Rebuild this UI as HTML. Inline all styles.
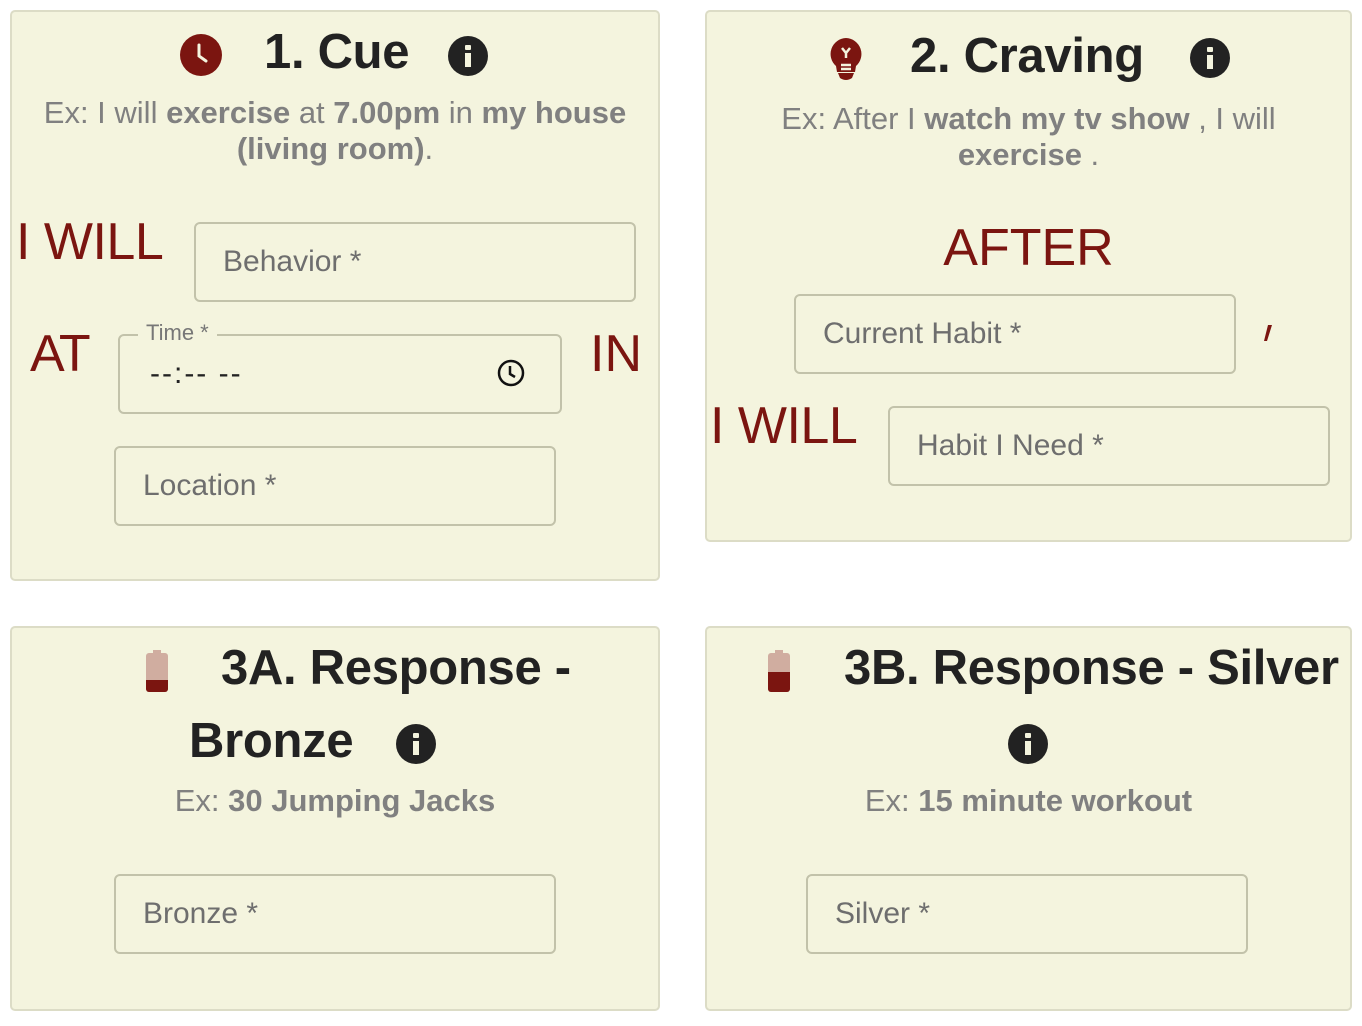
<!DOCTYPE html>
<html><head><style>
*{margin:0;padding:0;box-sizing:border-box}
body{width:1362px;height:1026px;background:#fff;font-family:"Liberation Sans",sans-serif;position:relative;overflow:hidden}
.card{position:absolute;background:#f4f4de;border:2px solid #dcdcc6;border-radius:5px}
.a{position:absolute;white-space:nowrap}
.t{font-weight:bold;font-size:49px;color:#222;letter-spacing:-0.3px}
.s{font-size:31px;color:#808080;text-align:center}
.s b{font-weight:bold}
.r{color:#7b1510;font-size:52px}
.in{position:absolute;border:2px solid #c2c2aa;border-radius:6px;height:80px;font-size:30px;color:#6e6e6e;padding-left:27px;line-height:76px}
.info{position:absolute;width:40px;height:40px;border-radius:50%;background:#222}
.info:before{content:"";position:absolute;left:17px;top:9px;width:6px;height:5px;background:#f4f4de;border-radius:1px}
.info:after{content:"";position:absolute;left:17px;top:17px;width:6px;height:14px;background:#f4f4de}
</style></head><body>
<div class="card" style="left:10px;top:10px;width:650px;height:571px"></div>
<div class="card" style="left:705px;top:10px;width:647px;height:532px"></div>
<div class="card" style="left:10px;top:626px;width:650px;height:385px"></div>
<div class="card" style="left:705px;top:626px;width:647px;height:385px"></div>

<!-- Card 1 -->
<svg class="a" style="left:180px;top:34px" width="42" height="42" viewBox="0 0 42 42"><circle cx="21" cy="21" r="21" fill="#7b1510"/><path d="M19 11 V22 L26 27" stroke="#f4f4de" stroke-width="3" fill="none" stroke-linecap="round"/></svg>
<div class="a t" style="left:264px;top:24px">1. Cue</div>
<div class="info" style="left:448px;top:36px"></div>
<div class="a s" style="left:10px;width:650px;top:95px">Ex: I will <b>exercise</b> at <b>7.00pm</b> in <b>my house</b></div>
<div class="a s" style="left:10px;width:650px;top:131px"><b>(living room)</b>.</div>
<div class="a r" style="left:16px;top:212px;letter-spacing:-0.5px">I WILL</div>
<div class="in" style="left:194px;top:222px;width:442px">Behavior *</div>
<div class="a r" style="left:30px;top:324px;letter-spacing:-2px">AT</div>
<div class="in" style="left:118px;top:334px;width:444px;padding-left:30px;color:#222;font-size:30px;letter-spacing:2px">--:-- --</div>
<div class="a" style="left:138px;top:320px;background:#f4f4de;padding:0 8px;font-size:22px;color:#777">Time *</div>
<svg class="a" style="left:497px;top:359px" width="28" height="28" viewBox="0 0 28 28"><circle cx="14" cy="14" r="12" stroke="#111" stroke-width="2.5" fill="none"/><path d="M13 7 V15 L18 18" stroke="#111" stroke-width="2.5" fill="none"/></svg>
<div class="a r" style="left:590px;top:324px">IN</div>
<div class="in" style="left:114px;top:446px;width:442px">Location *</div>

<!-- Card 2 -->
<svg class="a" style="left:828px;top:36px" width="36" height="46" viewBox="0 0 36 46"><path d="M18 2 A16 16 0 0 1 28 30 L27 36 H9 L8 30 A16 16 0 0 1 18 2Z M10 37 H26 L24 42 Q18 46 12 42Z" fill="#7b1510"/><path d="M14 12 L18 17 L22 12 M18 17 V22 M13 29 H23 M13 33 H23" stroke="#f4f4de" stroke-width="2.5" fill="none"/></svg>
<div class="a t" style="left:910px;top:28px">2. Craving</div>
<div class="info" style="left:1190px;top:38px"></div>
<div class="a s" style="left:705px;width:647px;top:101px">Ex: After I <b>watch my tv show</b> , I will</div>
<div class="a s" style="left:705px;width:647px;top:137px"><b>exercise</b> .</div>
<div class="a r" style="left:705px;width:647px;text-align:center;top:218px">AFTER</div>
<svg class="a" style="left:1262px;top:324px" width="12" height="18" viewBox="0 0 12 18"><path d="M6 1 L10 1 L5 17 L2 17Z" fill="#7b1510"/></svg>
<div class="in" style="left:794px;top:294px;width:442px">Current Habit *</div>
<div class="a r" style="left:710px;top:396px;letter-spacing:-0.5px">I WILL</div>
<div class="in" style="left:888px;top:406px;width:442px">Habit I Need *</div>

<!-- Card 3 -->
<svg class="a" style="left:146px;top:650px" width="22" height="42" viewBox="0 0 22 42"><rect x="7" y="0" width="8" height="4" fill="#d0ada0"/><rect x="0" y="3" width="22" height="39" rx="3" fill="#d0ada0"/><path d="M0 30 H22 V39 a3 3 0 0 1 -3 3 H3 a3 3 0 0 1 -3 -3Z" fill="#7b1510"/></svg>
<div class="a t" style="left:221px;top:640px">3A. Response -</div>
<div class="a t" style="left:189px;top:713px">Bronze</div>
<div class="info" style="left:396px;top:724px"></div>
<div class="a s" style="left:10px;width:650px;top:783px">Ex: <b>30 Jumping Jacks</b></div>
<div class="in" style="left:114px;top:874px;width:442px">Bronze *</div>

<!-- Card 4 -->
<svg class="a" style="left:768px;top:650px" width="22" height="42" viewBox="0 0 22 42"><rect x="7" y="0" width="8" height="4" fill="#d0ada0"/><rect x="0" y="3" width="22" height="39" rx="3" fill="#d0ada0"/><path d="M0 22 H22 V39 a3 3 0 0 1 -3 3 H3 a3 3 0 0 1 -3 -3Z" fill="#7b1510"/></svg>
<div class="a t" style="left:844px;top:640px">3B. Response - Silver</div>
<div class="info" style="left:1008px;top:724px"></div>
<div class="a s" style="left:705px;width:647px;top:783px">Ex: <b>15 minute workout</b></div>
<div class="in" style="left:806px;top:874px;width:442px">Silver *</div>
</body></html>
